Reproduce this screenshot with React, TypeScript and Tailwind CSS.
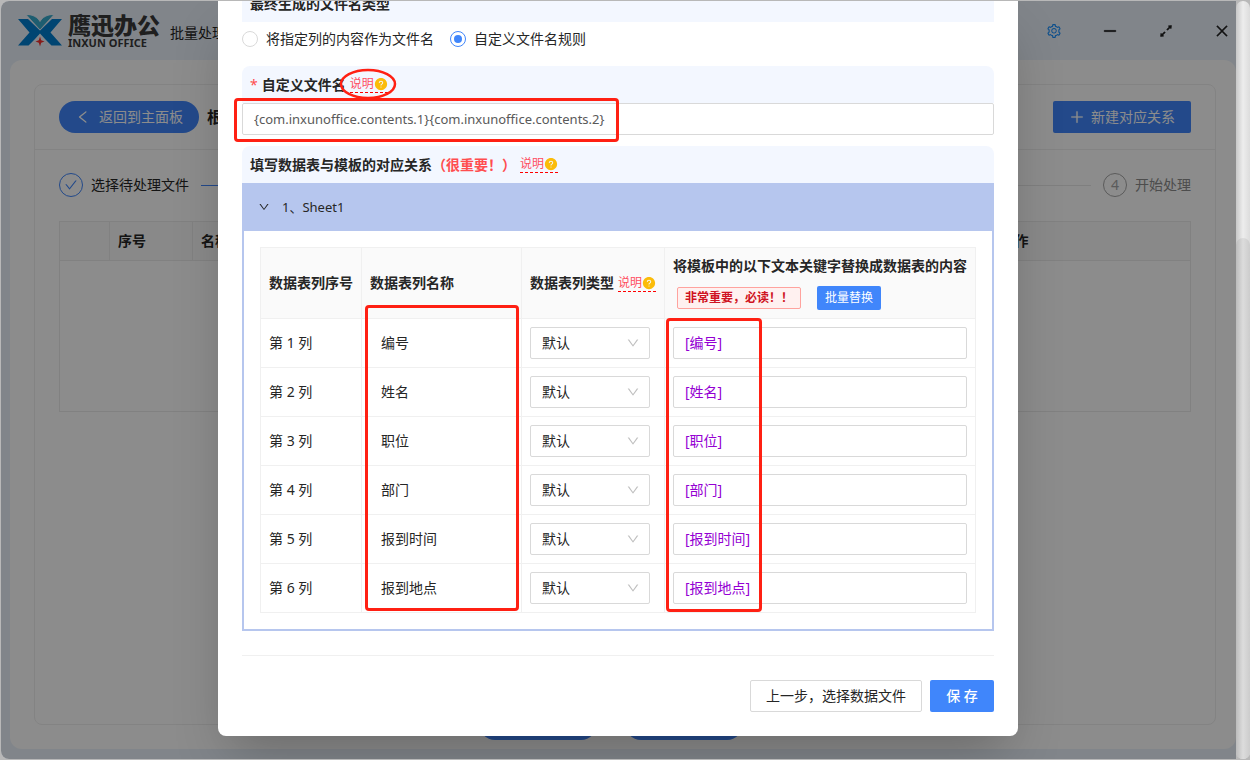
import React from "react";
import {
  AiFillQuestionCircle,
  AiOutlineArrowsAlt,
  AiOutlineCheck,
  AiOutlineClose,
  AiOutlineDown,
  AiOutlineLeft,
  AiOutlineMinus,
  AiOutlinePlus,
  AiOutlineSetting,
} from "react-icons/ai";

const rows = ["编号", "姓名", "职位", "部门", "报到时间", "报到地点"];

function Logo() {
  return (
    <div className="flex items-center gap-1.5">
      <svg className="h-8 w-11" viewBox="0 0 44 32" aria-hidden="true">
        <path d="M0 4h10l14 13.500L10.500 30.500H0L11.500 17.500z" fill="#007fd0" />
        <path d="M44 4H34L20 17.500l13.500 13H44L32.500 17.500z" fill="#007fd0" />
        <path d="M8 -.5c7.500 0 11.500 3 14 7C24.500 2.500 28.500 -.5 36 -.5L22 15z" fill="#35a9cc" stroke="#ecf3fc" strokeWidth=".8" />
        <path d="M22 18.500L34 32H10z" fill="#ecf3fc" />
        <path d="M22 21.500l1.200 3.800 3.300 1.200-3.300 1.200L22 31.500l-1.200-3.800-3.300-1.200 3.300-1.200z" fill="#f4322f" />
      </svg>
      <div className="flex flex-col text-[#393939]">
        <span className="text-[23px] leading-6 font-black">鹰迅办公</span>
        <span className="text-[11px] leading-3 font-bold">INXUN OFFICE</span>
      </div>
    </div>
  );
}

function HelpLink() {
  return (
    <a href="#help" className="inline-flex items-center border-b border-dashed border-[#f00] text-xs leading-4 font-normal text-[#ff4d5f]">
      说明
      <AiFillQuestionCircle className="size-3.5 text-[#fbbc0a]" />
    </a>
  );
}

function MarkBox({ className }: { className: string }) {
  return <div className={"pointer-events-none absolute rounded-sm border-3 border-[#ff2013] " + className} />;
}

function AppWindow() {
  return (
    <div className="flex h-full flex-col bg-[#ecf3fc] pb-2.5 pl-[9px]">
      <header className="flex h-[59px] items-center pr-1.5 pl-2">
        <Logo />
        <span className="mt-1 ml-2.5 text-sm">批量处理</span>
        <div className="ml-auto flex items-center gap-10 text-base">
          <button aria-label="设置" className="text-[#1890ff]"><AiOutlineSetting /></button>
          <button aria-label="最小化"><AiOutlineMinus className="stroke-black stroke-[40]" /></button>
          <button aria-label="最大化"><AiOutlineArrowsAlt className="stroke-black stroke-[30]" /></button>
          <button aria-label="关闭"><AiOutlineClose className="stroke-black stroke-[20]" /></button>
        </div>
      </header>
      <main className="flex flex-1 rounded-xl bg-white pt-6 pr-5 pb-6 pl-6">
        <section className="flex-1 rounded-lg border border-[#eeeeee]">
          <div className="flex h-[65px] items-center border-b border-[#eeeeee] px-6">
            <button className="flex h-8 items-center gap-2 rounded-full bg-[#4086fb] px-4 text-sm text-white">
              <AiOutlineLeft className="size-4" />
              返回到主面板
            </button>
            <h1 className="ml-2 text-base font-bold">根据模板批量生成文件</h1>
            <button className="ml-auto flex h-8 items-center gap-1.5 rounded-xs bg-[#4086fb] px-4 text-sm text-white">
              <AiOutlinePlus className="size-4 stroke-white stroke-[20]" />
              新建对应关系
            </button>
          </div>
          <div className="px-6 pt-[23px]">
            <div className="flex items-center text-sm">
              <span className="flex size-6 items-center justify-center rounded-full border border-[#4086fb] text-[#4086fb]">
                <AiOutlineCheck className="size-3.5" />
              </span>
              <span className="ml-2">选择待处理文件</span>
              <span className="mx-3 h-px flex-1 bg-[#4086fb]" />
              <span className="mr-3 h-px flex-1 bg-[#e8e8e8]" />
              <span className="flex size-6 items-center justify-center rounded-full border border-[#a6a6a6] text-[#a6a6a6]">4</span>
              <span className="ml-2 text-[#8c8c8c]">开始处理</span>
            </div>
            <table className="mt-6 w-full table-fixed border-collapse border border-[#ececec] text-left text-sm">
              <thead>
                <tr className="h-[39px] bg-[#fafafa]">
                  <th className="w-[50px] border border-[#ececec]" />
                  <th className="w-[83px] border border-[#ececec] px-2">序号</th>
                  <th className="border-b border-[#ececec] px-2">名称</th>
                  <th className="w-[194px] border-b border-[#ececec] px-1">操作</th>
                </tr>
              </thead>
              <tbody>
                <tr className="h-[151px]"><td colSpan={4} /></tr>
              </tbody>
            </table>
          </div>
        </section>
      </main>
      <div className="absolute inset-x-0 bottom-[19px] flex justify-center gap-7 pr-4">
        <button className="h-8 w-[118px] rounded-full bg-[#4086fb] text-sm text-white">上一步</button>
        <button className="h-8 w-[118px] rounded-full bg-[#4086fb] text-sm text-white">下一步</button>
      </div>
    </div>
  );
}

function RelationTable() {
  const th = "border border-[#f0f0f0] px-2 font-bold";
  const td = "border border-[#f0f0f0] px-2";
  return (
    <div className="relative">
      <table className="w-full table-fixed border-collapse text-left text-sm">
        <thead>
          <tr className="h-[71px] bg-[#fafafa]">
            <th className={th + " w-[101px]"}>数据表列序号</th>
            <th className={th + " w-[160px]"}>数据表列名称</th>
            <th className={th + " w-[143px]"}>
              <span className="flex items-center gap-1 whitespace-nowrap">数据表列类型 <HelpLink /></span>
            </th>
            <th className={th}>
              <div className="whitespace-nowrap">将模板中的以下文本关键字替换成数据表的内容</div>
              <div className="mt-2.5 ml-1 flex items-center gap-4 text-xs">
                <span className="flex h-[22px] w-[124px] items-center rounded-xs border border-[#ffa39e] bg-[#fff1f0] px-[7px] whitespace-nowrap text-[#cf1322]">非常重要，必读！！</span>
                <button className="h-6 rounded-xs bg-[#4086fb] px-2 font-normal text-white">批量替换</button>
              </div>
            </th>
          </tr>
        </thead>
        <tbody>
          {rows.map((name, i) => (
            <tr key={name} className="h-[49px]">
              <td className={td}>第 {i + 1} 列</td>
              <td className={td + " pl-[19px]"}>{name}</td>
              <td className={td}>
                <div className="relative w-[120px]">
                  <select aria-label={name + "类型"} className="block h-8 w-full appearance-none rounded-xs border border-[#d9d9d9] bg-white px-[11px]">
                    <option>默认</option>
                  </select>
                  <AiOutlineDown className="pointer-events-none absolute top-[9px] right-2.5 size-3.5 text-[#bfbfbf]" />
                </div>
              </td>
              <td className={td}>
                <input aria-label={name + "关键字"} defaultValue={"[" + name + "]"} className="block h-8 w-full rounded-xs border border-[#d9d9d9] px-[11px] pb-0.5 text-[#9400d3]" />
              </td>
            </tr>
          ))}
        </tbody>
      </table>
      <MarkBox className="top-[58px] left-[105px] h-[306px] w-[154px]" />
      <MarkBox className="top-[71px] left-[406px] h-[294px] w-[96px]" />
    </div>
  );
}

function Dialog() {
  return (
    <div role="dialog" aria-label="对应关系" className="w-[800px] overflow-hidden rounded-b-lg bg-white px-6 pb-6 text-sm shadow-2xl">
      <div className="-mt-4 flex h-[37px] items-center bg-[#f3f7ff] px-2 font-bold">最终生成的文件名类型</div>
      <div className="flex h-[34px] items-center gap-4">
        <label className="flex items-center gap-2">
          <input type="radio" name="rule" className="size-4 appearance-none rounded-full border border-[#d9d9d9]" />
          将指定列的内容作为文件名
        </label>
        <label className="flex items-center gap-2">
          <input type="radio" name="rule" defaultChecked className="size-4 appearance-none rounded-full border border-[#4086fb] bg-[#4086fb] bg-clip-content p-[3px]" />
          自定义文件名规则
        </label>
      </div>
      <div className="relative mt-2.5">
        <div className="flex h-[37px] items-center gap-1 rounded-t-lg bg-[#f3f7ff] px-2 font-bold">
          <label htmlFor="filename"><span className="mr-1 font-normal text-[#ff4d4f]">*</span>自定义文件名</label>
          <HelpLink />
        </div>
        <input id="filename" defaultValue="{com.inxunoffice.contents.1}{com.inxunoffice.contents.2}" className="block h-8 w-full rounded-xs border border-[#d9d9d9] px-[11px] text-[13px] text-[#595959]" />
        <svg className="pointer-events-none absolute top-0.5 left-[97px] h-8 w-[58px]" viewBox="0 0 58 32" aria-hidden="true">
          <ellipse cx="29" cy="16" rx="27" ry="14" fill="none" stroke="#ff2013" strokeWidth="2.500" />
        </svg>
        <MarkBox className="top-8 -left-2 h-[44px] w-[385px]" />
      </div>
      <div className="mt-[11px] flex h-[37px] items-center rounded-t-lg bg-[#f3f7ff] px-2 font-bold">
        填写数据表与模板的对应关系
        <span className="mr-1 text-[#ff4d4f]">（很重要！）</span>
        <HelpLink />
      </div>
      <button className="flex h-12 w-full items-center gap-3 bg-[#b6c6ee] px-4 text-[13px]">
        <AiOutlineDown className="size-3" />
        1、Sheet1
      </button>
      <div className="border-2 border-t-0 border-[#b6c6ee] px-4 pt-4 pb-4">
        <RelationTable />
      </div>
      <div className="mt-6 flex justify-end gap-2 border-t border-[#f0f0f0] pt-6">
        <button className="h-8 rounded-xs border border-[#d9d9d9] px-[15px]">上一步，选择数据文件</button>
        <button className="h-8 w-16 rounded-xs bg-[#4086fb] font-medium text-white">保 存</button>
      </div>
    </div>
  );
}

export default function App() {
  return (
    <div className="flex h-screen bg-[#b8b8b8] pt-px pb-px pl-px font-['Noto_Sans','Noto_Sans_CJK_SC',sans-serif] text-[#262626]">
      <div className="relative min-w-0 flex-1 overflow-hidden rounded-l-lg">
        <AppWindow />
        <div className="absolute inset-0 flex items-start justify-center bg-black/45 pr-px">
          <Dialog />
        </div>
      </div>
      <div className="w-3.5 rounded-lg bg-gradient-to-r from-[#c8c8c8] via-[#ededed] to-[#dcdcdc] pt-[237px]">
        <div className="h-full rounded-lg bg-gradient-to-r from-[#bcbcbc] via-[#dcdcdc] to-[#cccccc]" />
      </div>
    </div>
  );
}
